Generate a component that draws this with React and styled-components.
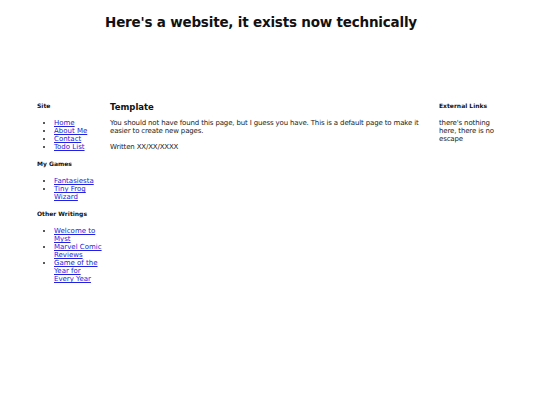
import React from 'react'
import styled, { createGlobalStyle } from 'styled-components'

const GlobalStyle = createGlobalStyle`
  html, body {
    margin: 0;
    padding: 0;
    background: #fff;
  }
  body {
    font-family: 'DejaVu Sans', Verdana, sans-serif;
    color: #222;
  }
`

const Page = styled.div`
  width: 540px;
  min-height: 405px;
`

const Header = styled.header`
  height: 98px;
  padding: 13px 18px 0 0;
  box-sizing: border-box;
  text-align: center;
`

const Title = styled.h1`
  margin: 0;
  font-size: 13.5px;
  line-height: 18px;
  letter-spacing: -0.2px;
  font-weight: bold;
  color: #111;
`

const Layout = styled.div`
  display: flex;
  align-items: flex-start;
  padding-left: 37px;
`

const Column = styled.div`
  flex: 0 0 ${p => p.width}px;
  margin-right: ${p => p.gap || 0}px;
  font-size: 7px;
  line-height: 8px;
`

const SideTitle = styled.h3`
  margin: ${p => (p.first ? '4px' : '9px')} 0 9px;
  font-size: 6px;
  line-height: 8px;
  font-weight: bold;
  color: #111;
`

const LinkList = styled.ul`
  margin: 0;
  padding-left: 17px;
  list-style: disc;
`

const Item = styled.li`
  font-size: 7px;
  line-height: 8px;
`

const NavLink = styled.a`
  color: #2222dd;
  text-decoration: underline;
`

const MainTitle = styled.h2`
  margin: 3px 0 6px;
  font-size: 8.5px;
  line-height: 12px;
  font-weight: bold;
  color: #111;
`

const Para = styled.p`
  margin: 0 0 8px;
  font-size: 7px;
  line-height: 8px;
  letter-spacing: -0.15px;
`

const sidebar = [
  { title: 'Site', links: ['Home', 'About Me', 'Contact', 'Todo List'] },
  { title: 'My Games', links: ['Fantasiesta', 'Tiny Frog Wizard'] },
  { title: 'Other Writings', links: ['Welcome to Myst', 'Marvel Comic Reviews', 'Game of the Year for Every\u00a0Year'] },
]

export default function App() {
  return (
    <Page>
      <GlobalStyle />
      <Header>
        <Title>Here's a website, it exists now technically</Title>
      </Header>
      <Layout>
        <Column width={66} gap={7}>
          {sidebar.map((group, i) => (
            <div key={group.title}>
              <SideTitle first={i === 0}>{group.title}</SideTitle>
              <LinkList>
                {group.links.map(l => (
                  <Item key={l}><NavLink href="#">{l}</NavLink></Item>
                ))}
              </LinkList>
            </div>
          ))}
        </Column>
        <Column width={324} gap={5}>
          <MainTitle>Template</MainTitle>
          <Para>
            You should not have found this page, but I guess you have. This is a default page to make it easier to create new pages.
          </Para>
          <Para>Written XX/XX/XXXX</Para>
        </Column>
        <Column width={64}>
          <SideTitle first>External Links</SideTitle>
          <Para>there's nothing here, there is no escape</Para>
        </Column>
      </Layout>
    </Page>
  )
}
